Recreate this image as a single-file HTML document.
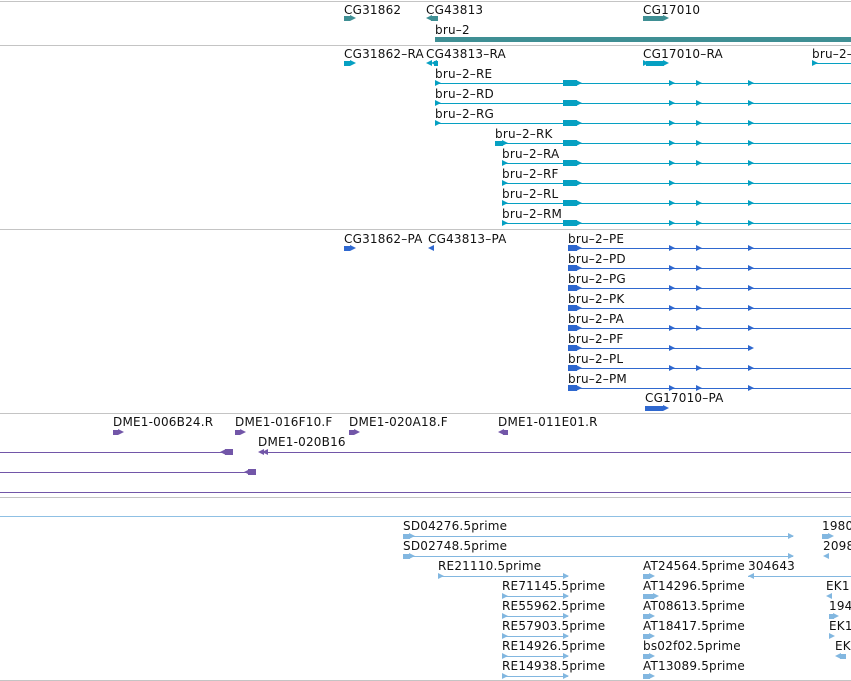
<!DOCTYPE html>
<html><head><meta charset="utf-8">
<style>
html,body{margin:0;padding:0;background:#fff;width:851px;height:681px;overflow:hidden;position:relative}
div{position:absolute}
.t{font:12px "DejaVu Sans","Liberation Sans",sans-serif;color:#111;white-space:nowrap;line-height:14px;letter-spacing:0.2px}
.g{left:0;width:851px;height:1px;background:#c4c4c4}
.r{width:0;height:0;border-top:3px solid transparent;border-bottom:3px solid transparent;border-left:6px solid}
.lf{width:0;height:0;border-top:3px solid transparent;border-bottom:3px solid transparent;border-right:6px solid}
</style></head><body>
<div class="g" style="top:1px"></div>
<div class="g" style="top:45px"></div>
<div class="g" style="top:229px"></div>
<div class="g" style="top:413px"></div>
<div class="g" style="top:497px"></div>
<div class="g" style="top:516px;background:#8fc0e4"></div>
<div class="g" style="top:680px"></div>
<div id="c"></div>
<script>
var c=document.getElementById('c'),h='';
function T(x,y,s){h+='<div class="t" style="left:'+x+'px;top:'+y+'px">'+s+'</div>';}
function L(x1,x2,y,col){h+='<div style="left:'+x1+'px;top:'+y+'px;width:'+(x2-x1)+'px;height:1px;background:'+col+'"></div>';}
function B(x1,x2,y,col,hh){hh=hh||6;h+='<div style="left:'+x1+'px;top:'+(y-hh/2)+'px;width:'+(x2-x1)+'px;height:'+hh+'px;background:'+col+'"></div>';}
function R(x,y,col){h+='<div class="r" style="left:'+x+'px;top:'+(y-3)+'px;color:'+col+'"></div>';}
function Lf(x,y,col){h+='<div class="lf" style="left:'+x+'px;top:'+(y-3)+'px;color:'+col+'"></div>';}
// track1
var a='#3f8f94';
T(344,3,'CG31862');B(344,350,18,a,5);R(350,18,a);
T(426,3,'CG43813');Lf(426,18,a);B(431,438,18,a,5);
T(643,3,'CG17010');B(643,663,18,a,5);R(663,18,a);
T(435,23,'bru–2');B(435,851,39,a,5);
// track2
var b='#06a0c2';
T(344,47,'CG31862–RA');B(344,350,63,b,5);R(350,63,b);
T(426,47,'CG43813–RA');Lf(426,63,b);Lf(431,63,b);B(434,438,63,b,5);
T(643,47,'CG17010–RA');R(643,63,b);B(646,664,63,b,5);R(663,63,b);
T(812,47,'bru–2–');L(813,851,63,b);R(812,63,b);
var rows=[['RE',435,83,3],['RD',435,103,3],['RG',435,123,3],['RK',495,143,3],['RA',502,163,3],['RF',502,183,2],['RL',502,203,3],['RM',502,223,3]];
rows.forEach(function(r){var y=r[2];T(r[1],y-16,'bru–2–'+r[0]);
 var sx=r[1];
 L(sx,851,y,b);if(r[0]=='RK'){B(495,503,y,b,5);R(502,y,b);}else R(sx,y,b);
 B(563,577,y,b,6);R(576,y,b);
 R(669,y,b);if(r[3]==3)R(696,y,b);R(748,y,b);});
// track3
var d='#2f68cf';
T(344,232,'CG31862–PA');B(344,350,248,d,5);R(350,248,d);
T(428,232,'CG43813–PA');Lf(428,248,d);
var p=['PE','PD','PG','PK','PA','PF','PL','PM'];
p.forEach(function(n,i){var y=248+i*20;T(568,y-16,'bru–2–'+n);
 L(568,n=='PF'?752:851,y,d);B(568,577,y,d,6);R(576,y,d);
 R(669,y,d);if(n!='PF')R(696,y,d);R(748,y,d);});
T(645,391,'CG17010–PA');B(645,663,408,d,5);R(663,408,d);
// track4
var e='#7256a8';
T(113,415,'DME1-006B24.R');B(113,118,432,e,5);R(118,432,e);
T(235,415,'DME1-016F10.F');B(235,240,432,e,5);R(240,432,e);
T(349,415,'DME1-020A18.F');B(349,354,432,e,5);R(354,432,e);
T(498,415,'DME1-011E01.R');Lf(498,432,e);B(503,508,432,e,5);
T(258,435,'DME1-020B16');
L(0,226,452,e);Lf(220,452,e);B(225,233,452,e,6);
L(260,851,452,e);Lf(258,452,e);Lf(262,452,e);
L(0,250,472,e);Lf(244,472,e);B(248,256,472,e,6);
L(0,851,492,e);
// track5
var f='#82b7e0';
T(403,519,'SD04276.5prime');L(403,793,536,f);B(403,410,536,f,5);R(409,536,f);R(788,536,f);
T(822,519,'1980');B(822,828,536,f,5);R(828,536,f);
T(403,539,'SD02748.5prime');L(403,793,556,f);B(403,410,556,f,5);R(409,556,f);R(788,556,f);
T(823,539,'2098');Lf(823,556,f);
T(438,559,'RE21110.5prime');L(438,568,576,f);R(438,576,f);R(563,576,f);
T(643,559,'AT24564.5prime');B(643,650,576,f,5);R(649,576,f);
T(748,559,'304643');L(748,851,576,f);Lf(748,576,f);
var re=['RE71145','RE55962','RE57903','RE14926','RE14938'];
var at=['AT14296','AT08613','AT18417','bs02f02','AT13089'];
re.forEach(function(n,i){var y=596+i*20;T(502,y-17,n+'.5prime');L(502,568,y,f);R(502,y,f);R(563,y,f);
 T(643,y-17,at[i]+'.5prime');B(643,i==0?654:650,y,f,5);R(i==0?653:649,y,f);});
T(826,579,'EK1');Lf(826,596,f);
T(829,599,'194');B(829,834,616,f,5);R(833,616,f);
T(829,619,'EK1');R(829,636,f);
T(835,639,'EK');Lf(835,656,f);B(840,846,656,f,5);
c.innerHTML=h;
</script>
</body></html>
